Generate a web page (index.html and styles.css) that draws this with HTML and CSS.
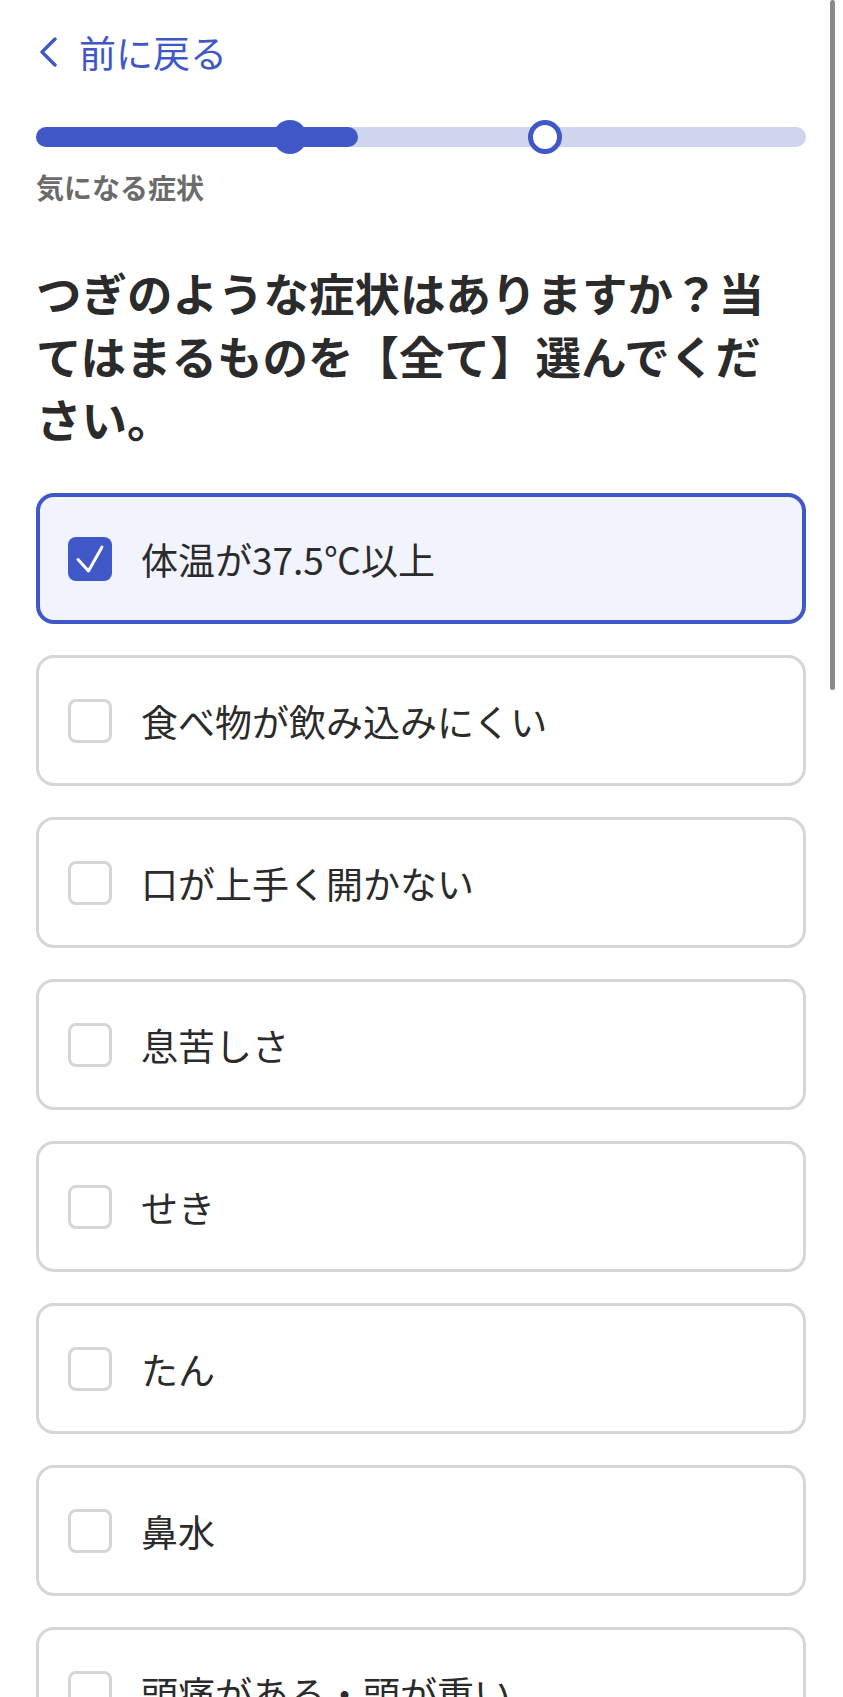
FILE: index.html
```html
<!DOCTYPE html>
<html lang="ja">
<head>
    <meta charset="UTF-8">
    <title>気になる症状</title>
    <link rel="stylesheet" href="styles.css">
</head>
<body>
    <div class="page">
        <a class="back-link" href="#">
            <svg class="back-icon" width="18" height="30" viewBox="0 0 18 30">
                <polyline points="16,2 3,15 16,28" fill="none" stroke="#4058c7" stroke-width="3.4" stroke-linecap="round" stroke-linejoin="round"/>
            </svg>
            <span>前に戻る</span>
        </a>

        <div class="progress">
            <div class="progress-track">
                <div class="progress-fill"></div>
                <span class="knob knob-done"></span>
                <span class="knob knob-current"></span>
            </div>
        </div>
        <div class="step-label">気になる症状</div>

        <h1 class="question">つぎのような症状はありますか？当てはまるものを【全て】選んでください。</h1>

        <ul class="option-list">
            <li class="option selected">
                <span class="checkbox">
                    <svg width="44" height="44" viewBox="0 0 44 44">
                        <polyline points="10,22.5 20.5,34 34,10" fill="none" stroke="#fff" stroke-width="3" stroke-linecap="round" stroke-linejoin="round"/>
                    </svg>
                </span>
                <span class="option-text">体温が37.5℃以上</span>
            </li>
            <li class="option">
                <span class="checkbox"></span>
                <span class="option-text">食べ物が飲み込みにくい</span>
            </li>
            <li class="option">
                <span class="checkbox"></span>
                <span class="option-text">口が上手く開かない</span>
            </li>
            <li class="option">
                <span class="checkbox"></span>
                <span class="option-text">息苦しさ</span>
            </li>
            <li class="option">
                <span class="checkbox"></span>
                <span class="option-text">せき</span>
            </li>
            <li class="option">
                <span class="checkbox"></span>
                <span class="option-text">たん</span>
            </li>
            <li class="option">
                <span class="checkbox"></span>
                <span class="option-text">鼻水</span>
            </li>
            <li class="option">
                <span class="checkbox"></span>
                <span class="option-text">頭痛がある・頭が重い</span>
            </li>
        </ul>
    </div>
    <div class="scroll-indicator"></div>
</body>
</html>
```

FILE: styles.css
```css
html, body {
    margin: 0;
    height: 100%;
    overflow: hidden; /* 只显示一屏 */
}
body {
    font-family: "Noto Sans CJK JP", "Noto Sans", sans-serif;
    background-color: #fff;
    color: #2b2b2b;
}
.page {
    padding: 22px 37px 0 36px;
}

/* 返回链接 */
.back-link {
    display: flex;
    align-items: center;
    gap: 22px;
    height: 60px;
    color: #4058c7;
    font-size: 37px;
    text-decoration: none;
    padding-left: 3px;
}
.back-icon {
    display: block;
}

/* 进度条 */
.progress {
    margin-top: 35px;
    height: 40px;
    display: flex;
    align-items: center;
}
.progress-track {
    position: relative;
    width: 100%;
    height: 20px;
    border-radius: 10px;
    background-color: #cfd5ef;
}
.progress-fill {
    width: 41.8%;
    height: 100%;
    border-radius: 10px;
    background-color: #4058c7;
}
.knob {
    position: absolute;
    top: 50%;
    width: 34px;
    height: 34px;
    border-radius: 50%;
    box-sizing: border-box;
    transform: translate(-50%, -50%);
}
.knob-done {
    left: 33%;
    background-color: #4058c7;
}
.knob-current {
    left: 66.1%;
    background-color: #fff;
    border: 5px solid #4058c7;
}
.step-label {
    margin-top: 12px;
    font-size: 28px;
    line-height: 36px;
    font-weight: bold;
    color: #6b6b6b;
}

/* 问题 */
.question {
    margin: 56px 0 0;
    font-size: 45.5px;
    line-height: 63px;
    font-weight: bold;
    color: #2b2b2b;
}

/* 选项 */
.option-list {
    list-style-type: none;
    margin: 43px 0 0;
    padding: 0;
    display: flex;
    flex-direction: column;
    gap: 31px;
}
.option {
    box-sizing: border-box;
    height: 131px;
    display: flex;
    align-items: center;
    gap: 29px;
    padding-left: 29px;
    border: 3px solid #d6d6d6;
    border-radius: 18px;
    background-color: #fff;
}
.option.selected {
    border: 4px solid #4058c7;
    padding-left: 28px;
    background-color: #f1f4fc;
}
.checkbox {
    box-sizing: border-box;
    flex: none;
    width: 44px;
    height: 44px;
    border: 3px solid #d6d6d6;
    border-radius: 8px;
    background-color: #fff;
}
.selected .checkbox {
    border: none;
    background-color: #4058c7;
}
.checkbox svg {
    display: block;
}
.option-text {
    font-size: 37px;
    color: #2b2b2b;
}

/* 右侧滚动指示 */
.scroll-indicator {
    position: fixed;
    top: 0;
    right: 8px;
    width: 5px;
    height: 690px;
    border-radius: 3px;
    background-color: #8a8a8a;
}
```
